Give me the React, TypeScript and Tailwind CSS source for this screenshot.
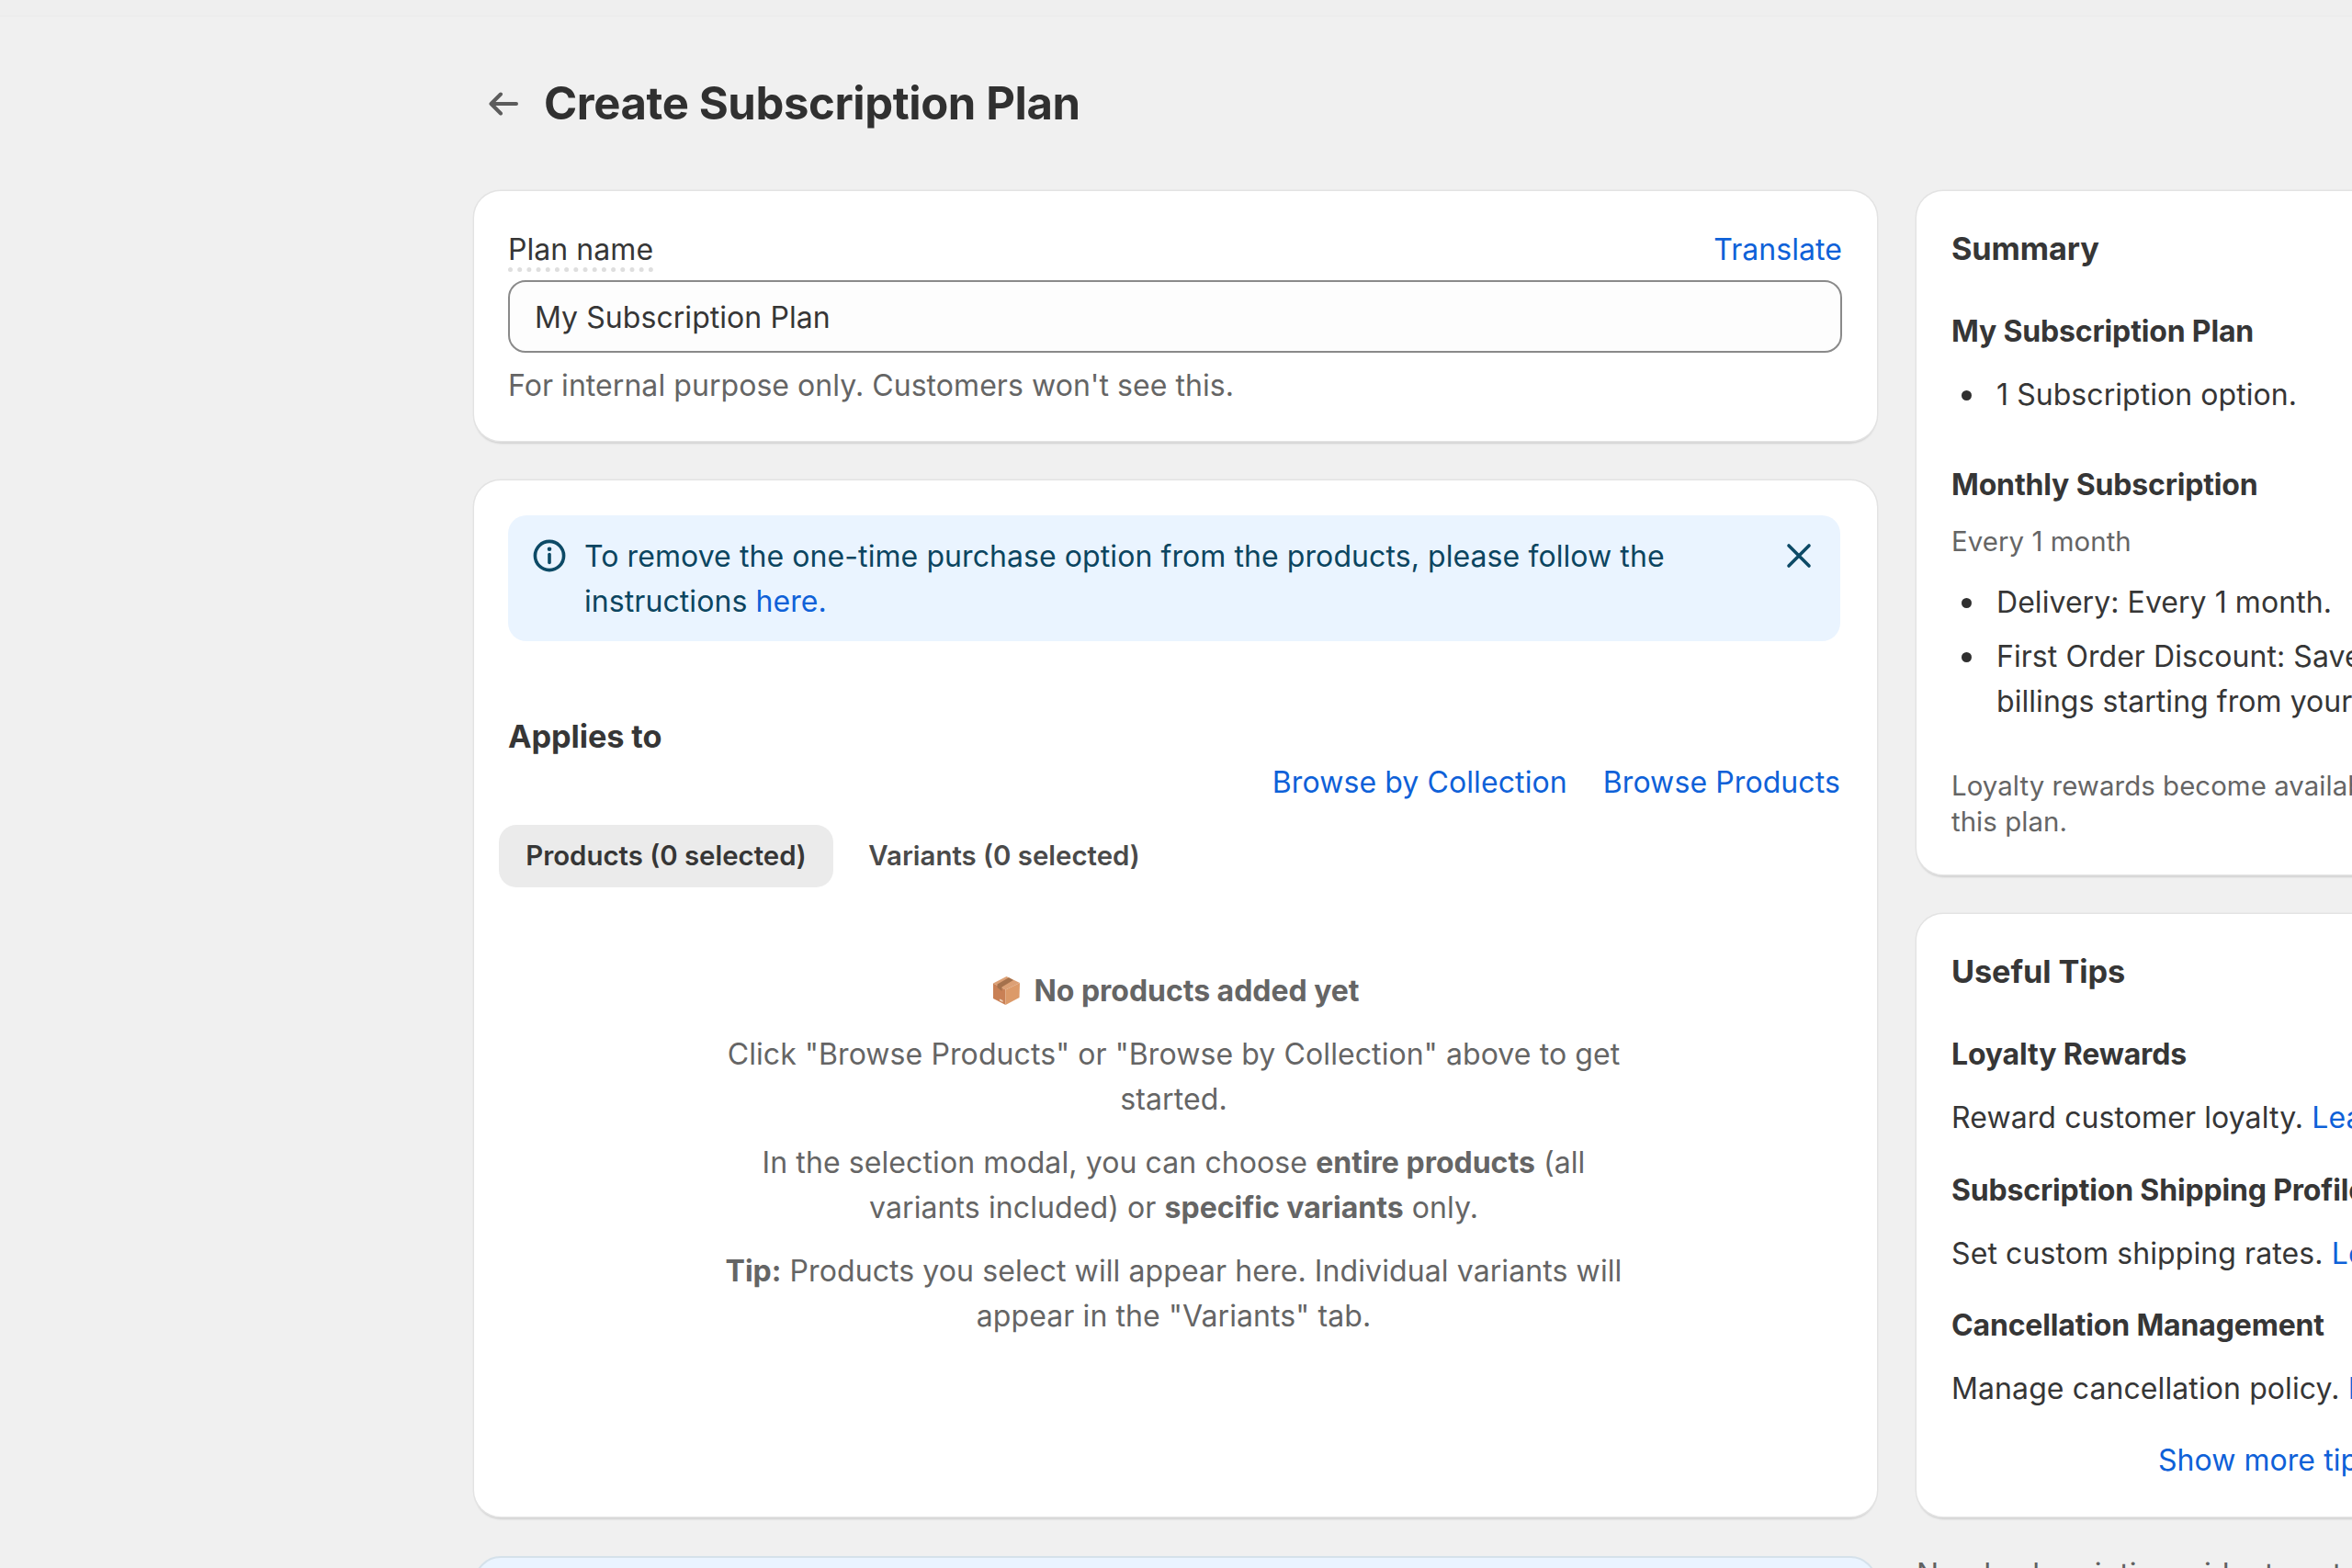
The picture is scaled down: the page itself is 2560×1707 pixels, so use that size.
import React from 'react';

type CardProps = { className?: string; children?: React.ReactNode };

const Card = ({ className = '', children }: CardProps) => (
  <section
    className={`rounded-[29px] bg-white shadow-[0_0_0_1.5px_#e3e3e3,0_4px_2px_-1px_#cfcfcf] ${className}`}
  >
    {children}
  </section>
);

const Bullet = ({ children }: { children: React.ReactNode }) => (
  <li className="flex gap-[27px] pl-[11px]">
    <span className="mt-[20px] h-[11px] w-[11px] shrink-0 rounded-full bg-[#303030]" />
    <span>{children}</span>
  </li>
);

const tips = [
  { title: 'Loyalty Rewards', text: 'Reward customer loyalty.' },
  { title: 'Subscription Shipping Profile', text: 'Set custom shipping rates.' },
  { title: 'Cancellation Management', text: 'Manage cancellation policy.' },
];

const BackArrow = () => (
  <svg width="32" height="28" viewBox="0 0 32 28" fill="none" stroke="#5c5c5c" strokeWidth="4" strokeLinecap="round" strokeLinejoin="round">
    <path d="M30 14H3M13 3.500 2.500 14l10.500 10.500" />
  </svg>
);

const InfoIcon = () => (
  <svg width="36" height="36" viewBox="0 0 36 36" fill="none">
    <circle cx="18" cy="18" r="15.600" stroke="#0d4a66" strokeWidth="3.600" />
    <circle cx="18" cy="10.800" r="2.300" fill="#0d4a66" />
    <path d="M18 16.500v9" stroke="#0d4a66" strokeWidth="3.600" strokeLinecap="round" />
  </svg>
);

const CloseIcon = () => (
  <svg width="28" height="28" viewBox="0 0 28 28" fill="none" stroke="#0d4a66" strokeWidth="3.600" strokeLinecap="round">
    <path d="M3 3l22 22M25 3 3 25" />
  </svg>
);

const PackageIcon = () => (
  <svg width="31" height="33" viewBox="0 0 31 33">
    <path d="M15.500 1 30 8 14.500 15.500 1 8.500Z" fill="#dca075" />
    <path d="M1 8.500l13.500 7V32L1 25Z" fill="#c98055" />
    <path d="M30 8 14.500 15.500V32L29.500 24Z" fill="#dc9a69" />
    <path d="M18 2.200 5.500 9.500v3.500l5 4v-4.500L23 5Z" fill="#a5714c" />
    <path d="M8 25.500l3.500 1.500v2L8 27.300Z" fill="#f0d4bd" />
  </svg>
);

const App = () => {
  return (
    <div className="h-[1707px] w-[2560px] overflow-hidden bg-[#f0f0f0] font-['Inter',sans-serif] text-[32px] leading-[49px] tracking-[0.0018em] text-[#363636]">
      <div className="h-[18px] border-b border-[#ebebeb] bg-[#efefef]" />

      {/* Page header */}
      <header className="flex h-[190px] items-center gap-[28px] pl-[532px]">
        <BackArrow />
        <h1 className="pb-[2px] text-[49px] font-[650] tracking-[-0.008em] text-[#303030]">Create Subscription Plan</h1>
      </header>

      <main className="flex gap-[43px] pl-[516px]">
        <div className="flex w-[1527px] shrink-0 flex-col gap-[43px]">
          <Card className="h-[272px] pt-[39px] pr-[38px] pl-[37px]">
            <div className="flex justify-between">
              <label className="h-[49px] border-b-[5px] border-dotted border-[#dedede]">Plan name</label>
              <a className="text-[#0e61d8]">Translate</a>
            </div>
            <div className="mt-[9px] flex h-[79px] items-center rounded-[19px] border-2 border-[#8a8a8a] bg-[#fdfdfd] px-[27px] pt-[1px]">
              My Subscription Plan
            </div>
            <p className="mt-[11px] text-[#656565]">For internal purpose only. Customers won't see this.</p>
          </Card>

          <Card className="h-[1128px] pt-[38px] pr-[40px] pl-[37px]">
            <div className="flex h-[137px] rounded-[20px] bg-[#eaf4ff] pt-[20px] pl-[27px]">
              <div className="mt-[6px]">
                <InfoIcon />
              </div>
              <p className="ml-[20px] w-[1240px] tracking-[0.0025em] text-[#0b4560]">
                To remove the one-time purchase option from the products, please follow the instructions{' '}
                <a className="text-[#0e61d8]">here.</a>
              </p>
              <div className="mt-[10px] ml-[68px]">
                <CloseIcon />
              </div>
            </div>

            <h2 className="mt-[79px] text-[34.3px] font-[650] tracking-[-0.003em]">Applies to</h2>
            <div className="mt-[1px] flex justify-end gap-[39px] tracking-[0.003em] text-[#0e61d8]">
              <a>Browse by Collection</a>
              <a>Browse Products</a>
            </div>

            <div className="mt-[22px] -ml-[10px] flex text-[29.4px] font-[580] tracking-normal">
              <button className="h-[68px] w-[364px] rounded-[19px] bg-[#ebebeb] pb-[1px]">Products (0 selected)</button>
              <button className="ml-[10px] h-[68px] w-[352px] pb-[1px] text-[#4a4a4a]">Variants (0 selected)</button>
            </div>

            <div className="mx-auto mt-[88px] flex w-[1000px] flex-col gap-[20px] pr-[1px] text-center tracking-[0.003em] text-[#656565]">
              <p className="flex items-center justify-center gap-[14px] pl-[5px] font-[660] tracking-[-0.001em]">
                <PackageIcon />
                No products added yet
              </p>
              <p>Click "Browse Products" or "Browse by Collection" above to get started.</p>
              <p>
                In the selection modal, you can choose <b className="font-[660] tracking-normal">entire products</b> (all
                variants included) or <b className="font-[660] tracking-normal">specific variants</b> only.
              </p>
              <p>
                <b className="font-[660] tracking-normal">Tip:</b> Products you select will appear here. Individual
                variants will appear in the "Variants" tab.
              </p>
            </div>
          </Card>

          <div className="h-[200px] rounded-[29px] border-2 border-[#d5e1ea] bg-[#eaf4ff]" />
        </div>

        {/* Sidebar, runs past the right edge */}
        <aside className="flex w-[754px] shrink-0 flex-col gap-[43px] whitespace-nowrap">
          <Card className="h-[744px] px-[38px] pt-[38px]">
            <h2 className="text-[34.3px] font-[650] tracking-[-0.003em]">Summary</h2>
            <h3 className="mt-[41px] font-[650] tracking-[-0.005em]">My Subscription Plan</h3>
            <ul className="mt-[20px]">
              <Bullet>1 Subscription option.</Bullet>
            </ul>
            <h3 className="mt-[49px] font-[650] tracking-[-0.005em]">Monthly Subscription</h3>
            <p className="mt-[18px] text-[29.4px] leading-[39px] text-[#656565]">Every 1 month</p>
            <ul className="mt-[22px] flex flex-col gap-[10px]">
              <Bullet>Delivery: Every 1 month.</Bullet>
              <Bullet>
                First Order Discount: Save 10% on
                <br />
                billings starting from your first
              </Bullet>
            </ul>
            <p className="mt-[48px] text-[29.4px] leading-[39px] text-[#656565]">
              Loyalty rewards become available for
              <br />
              this plan.
            </p>
          </Card>

          <Card className="h-[656px] px-[38px] pt-[38px]">
            <h2 className="text-[34.3px] font-[650] tracking-[-0.003em]">Useful Tips</h2>
            <div className="mt-[41px] flex flex-col gap-[29.500px]">
              {tips.map((tip) => (
                <div key={tip.title} className="flex flex-col gap-[20px]">
                  <h3 className="font-[650] tracking-[-0.005em]">{tip.title}</h3>
                  <p className="tracking-[0.003em]">
                    {tip.text} <a className="text-[#0e61d8]">Learn more</a>
                  </p>
                </div>
              ))}
            </div>
            <a className="mt-[29px] block pl-[7px] text-center text-[#0e61d8]">Show more tips</a>
          </Card>

          <p className="-mt-[5px] text-[#616161]">Need subscription widget customization?</p>
        </aside>
      </main>
    </div>
  );
};

export default App;
